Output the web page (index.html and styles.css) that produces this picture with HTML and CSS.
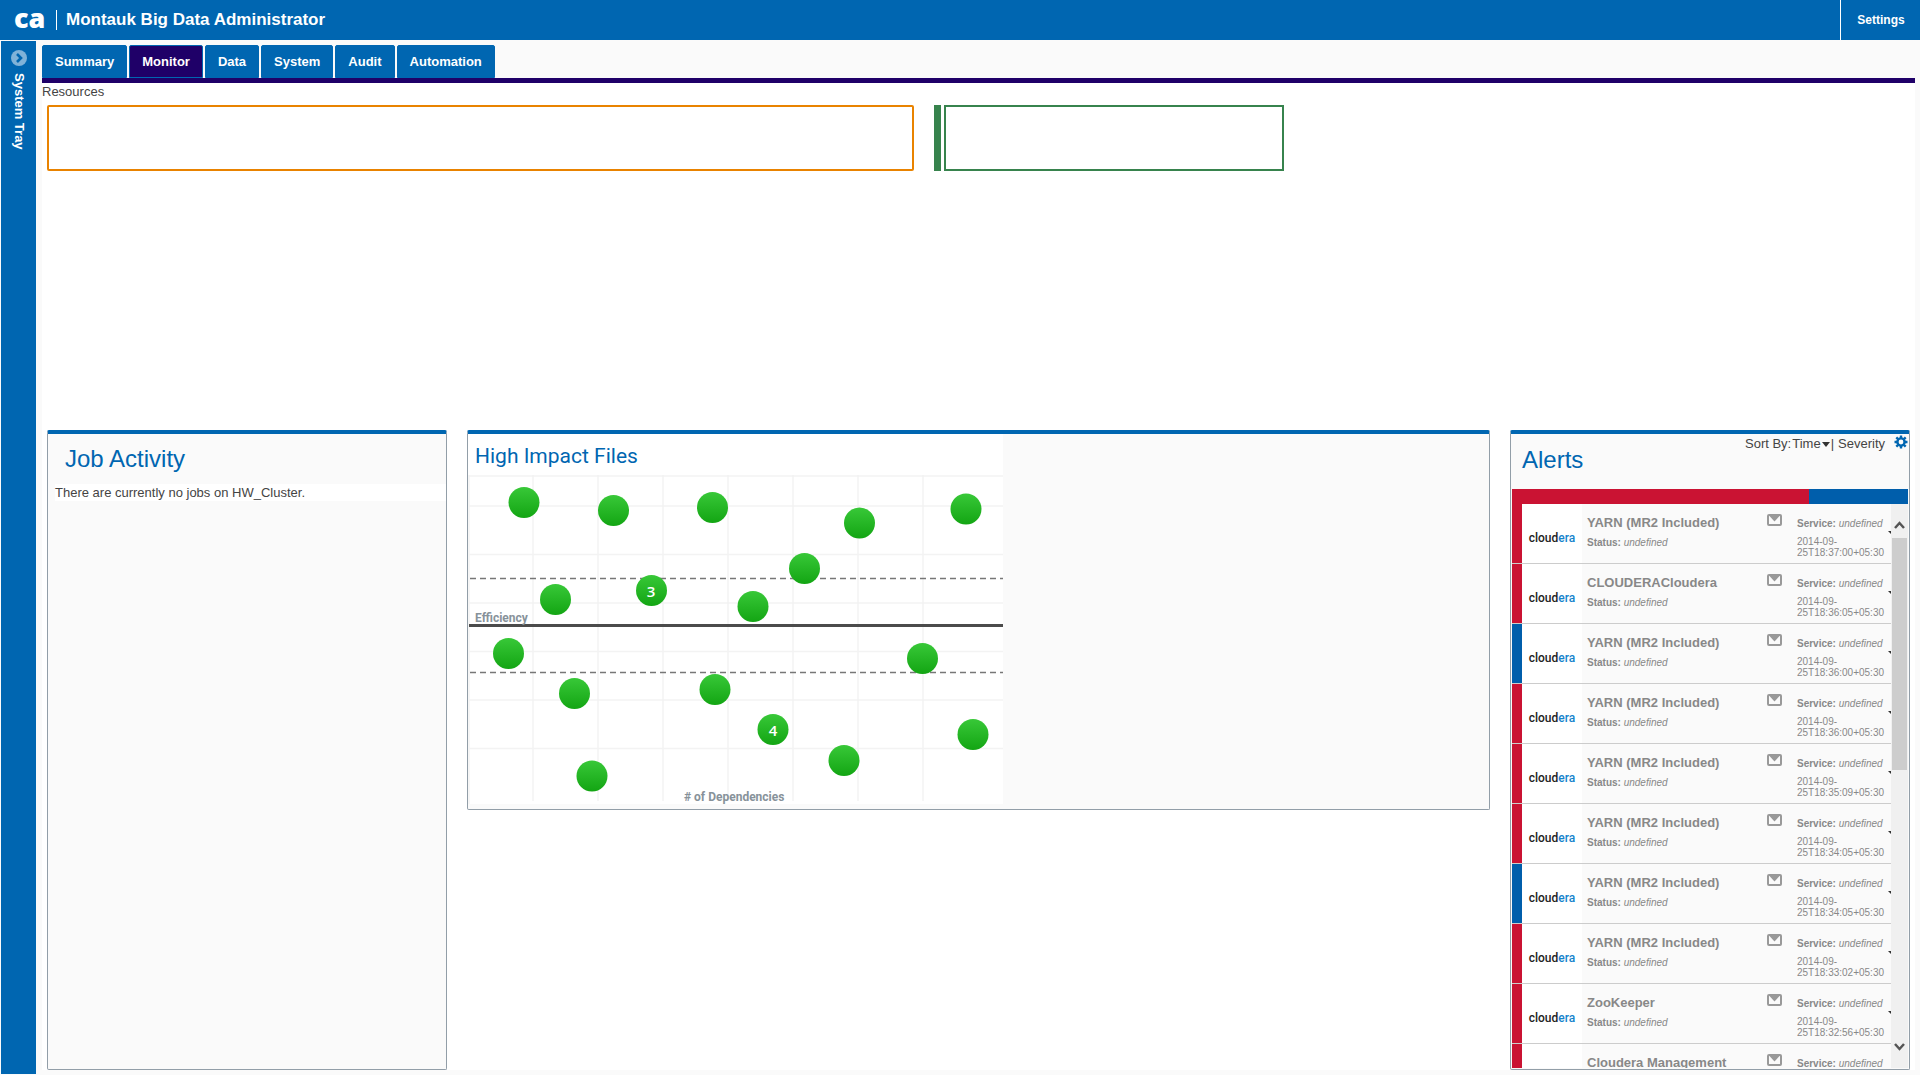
FILE: index.html
```html
<!DOCTYPE html>
<html lang="en">
<head>
<meta charset="utf-8">
<title>Montauk Big Data Administrator</title>
<link rel="stylesheet" href="styles.css">
</head>
<body>
<svg class="defs" aria-hidden="true">
  <symbol id="mail" viewBox="0 0 15 12">
    <rect x="1" y="1" width="13" height="10" rx="1" fill="none" stroke="#999" stroke-width="2"/>
    <path d="M2 1.500h11L7.500 7.500z" fill="#999"/>
  </symbol>
</svg>
<header class="topbar">
  <span class="logo">ca</span>
  <h1 class="app-title">Montauk Big Data Administrator</h1>
  <button class="settings" type="button">Settings</button>
</header>
<div class="shell">
  <aside class="tray">
    <button class="tray-toggle" type="button">
      <svg width="16" height="16" viewBox="0 0 16 16" aria-hidden="true"><circle cx="8" cy="8" r="8" fill="#80b2d8"/><path d="M6 4l4 4-4 4" fill="none" stroke="#0066b1" stroke-width="2.600"/></svg>
      <span class="tray-label">System Tray</span>
    </button>
  </aside>
  <main class="main">
    <nav class="tabs">
      <a class="tab" href="#summary">Summary</a>
      <a class="tab active" href="#monitor" aria-current="page">Monitor</a>
      <a class="tab" href="#data">Data</a>
      <a class="tab" href="#system">System</a>
      <a class="tab" href="#audit">Audit</a>
      <a class="tab" href="#automation">Automation</a>
    </nav>
    <div class="content">
      <section class="resources">
        <h2 class="resources-title">Resources</h2>
        <div class="resource-row">
          <div class="resource warn"></div>
          <div class="resource-group"><div class="resource-mark"></div><div class="resource ok"></div></div>
        </div>
      </section>
      <div class="panels">
        <section class="panel jobs">
          <h2 class="panel-title">Job Activity</h2>
          <p class="job-note">There are currently no jobs on HW_Cluster.</p>
        </section>
        <section class="panel impact">
          <div class="chart">
            <h2 class="chart-title">High Impact Files</h2>
            <svg class="plot" viewBox="0 0 535 329" role="img" aria-label="Efficiency by number of dependencies">
              <defs>
                <linearGradient id="dot" x1="0" y1="0" x2="0" y2="1"><stop offset="0" stop-color="#38c838"/><stop offset="1" stop-color="#13a513"/></linearGradient>
              </defs>
              <path class="grid" d="M65 0v326M130 0v326M195 0v326M260 0v326M325 0v326M390 0v326M455 0v326M1 0v329M1 1h534M1 31h534M1 79.500h534M1 128h534M1 176.500h534M1 225h534M1 273.500h534"/>
              <path class="dashes" d="M2 103.500h533M2 197.500h533"/>
              <path class="axis" d="M1 150.500h534"/>
              <g fill="url(#dot)">
                <circle cx="56" cy="27.500" r="15.500"/>
                <circle cx="145.500" cy="35.500" r="15.500"/>
                <circle cx="244.500" cy="32.500" r="15.500"/>
                <circle cx="391.500" cy="48" r="15.500"/>
                <circle cx="498" cy="34" r="15.500"/>
                <circle cx="336.500" cy="93.500" r="15.500"/>
                <circle cx="87.500" cy="124.500" r="15.500"/>
                <circle cx="183.500" cy="115.500" r="15.500"/>
                <circle cx="285" cy="131.500" r="15.500"/>
                <circle cx="40.500" cy="178.500" r="15.500"/>
                <circle cx="454.500" cy="183.500" r="15.500"/>
                <circle cx="106.500" cy="218.500" r="15.500"/>
                <circle cx="247" cy="214.500" r="15.500"/>
                <circle cx="305" cy="254.500" r="15.500"/>
                <circle cx="505" cy="259.500" r="15.500"/>
                <circle cx="376" cy="285.500" r="15.500"/>
                <circle cx="124" cy="301" r="15.500"/>
              </g>
              <text class="count" x="183" y="122">3</text>
              <text class="count" x="305" y="261">4</text>
              <text class="axis-label" x="7" y="147">Efficiency</text>
              <text class="axis-label" x="216" y="326"># of Dependencies</text>
            </svg>
          </div>
        </section>
        <section class="panel alerts">
          <div class="alerts-head">
            <h2 class="panel-title">Alerts</h2>
            <div class="sort">
              <span>Sort By:</span>
              <button type="button" class="sort-time">Time<svg width="8" height="5" aria-hidden="true"><path d="M0 0h8L4 5z" fill="#333"/></svg></button>
              <span>|</span>
              <button type="button" class="sort-severity">Severity</button>
              <button type="button" class="gear" aria-label="Alert settings"><svg width="14" height="14" viewBox="0 0 14 14"><circle cx="7" cy="7" r="3.600" fill="none" stroke="#0066b1" stroke-width="2.400"/><path d="M7 3V.5M7 11v2.500M3 7H.5M11 7h2.500M4 4L2.300 2.300M10 10l1.700 1.700M10 4l1.700-1.700M4 10l-1.700 1.700" stroke="#0066b1" stroke-width="2.400"/></svg></button>
            </div>
          </div>
          <div class="ratio"><div class="ratio-critical" style="width:75%"></div></div>
          <div class="alerts-body">
            <ul class="alert-list" id="alert-list"></ul>
            <div class="scrollbar" aria-hidden="true">
              <svg width="11" height="8"><path d="M1 7l4.500-5L10 7" fill="none" stroke="#555" stroke-width="2.500"/></svg>
              <div class="scroll-track"><div class="thumb"></div></div>
              <svg width="11" height="8"><path d="M1 1l4.500 5L10 1" fill="none" stroke="#555" stroke-width="2.500"/></svg>
            </div>
          </div>
        </section>
      </div>
    </div>
  </main>
</div>
<script src="alerts.js"></script>
</body>
</html>
```
FILE: styles.css
```css
* { box-sizing: border-box; }
body {
  margin: 0;
  display: flex;
  flex-direction: column;
  height: 100vh;
  min-height: 860px;
  background: #fafafa;
  color: #444;
  font: 13px/16px "Liberation Sans", Arial, sans-serif;
}
h1, h2, h3, p, ul { margin: 0; padding: 0; font-weight: normal; }
ul { list-style: none; }
button { border: 0; padding: 0; background: none; color: inherit; font: inherit; cursor: pointer; }
svg { display: block; }
.defs { position: absolute; width: 0; height: 0; }

.topbar { display: flex; align-items: center; flex: none; height: 40px; padding-left: 14px; background: #0066b1; color: #fff; }
.logo { width: 32px; padding-bottom: 4px; font: 800 27px/36px "Open Sans", sans-serif; }
.app-title { margin-left: 10px; padding-left: 9px; border-left: 1px solid #fff; font-size: 17px; font-weight: bold; line-height: 20px; }
.settings { align-self: stretch; width: 80px; margin-left: auto; padding-left: 1px; border-left: 1px solid #fff; font-size: 12px; font-weight: bold; }

.shell { display: flex; flex: 1; min-height: 0; padding: 1px 5px 1px 1px; }
.tray { flex: none; width: 35px; background: #0066b1; color: #fff; }
.tray-toggle { display: flex; flex-direction: column; align-items: center; gap: 7px; width: 100%; padding-top: 9px; }
.tray-label { writing-mode: vertical-rl; font-weight: bold; }

.main { display: flex; flex-direction: column; flex: 1; min-width: 0; padding: 4px 0 4px 6px; }
.tabs { display: flex; flex: none; gap: 2px; border-bottom: 5px solid #1f0068; }
.tab { padding: 0 12px; border: 1px solid #0066b1; border-radius: 2px 2px 0 0; background: #0066b1; color: #fff; font-weight: bold; line-height: 31px; text-decoration: none; }
.tab.active { background: #1f0068; }
.content { display: flex; flex-direction: column; flex: 1; min-height: 0; background: #fff; }

.resources { flex: none; height: 347px; }
.resources-title { font-size: 13px; line-height: 18px; }
.resource-row { display: grid; grid-template-columns: 867fr 350fr 606fr; gap: 20px; padding: 4px 5px; }
.resource { flex: 1; height: 66px; border: 2px solid; }
.resource.warn { border-color: #e98300; border-radius: 2px; }
.resource.ok { border-color: #37834d; }
.resource-group { display: flex; gap: 3px; }
.resource-mark { width: 7px; background: #37834d; }

.panels { display: grid; grid-template-columns: 400px 1fr 400px; grid-template-rows: minmax(0, 1fr); gap: 20px; flex: 1; min-height: 0; padding: 0 5px; }
.panel { border: 1px solid #929ea8; border-top: 4px solid #0066b1; border-radius: 2px; background: #fafafa; }
.panel-title { color: #0066b1; font-size: 24px; line-height: 28px; }
.jobs .panel-title { padding: 11px 17px; }
.job-note { margin-left: 7px; background: #fff; line-height: 17px; }

.impact { align-self: start; padding-bottom: 5px; }
.chart { width: 535px; max-width: 100%; background: #fff; }
.chart-title { height: 41px; padding: 6px 7px 0; color: #0066b1; font: 21px/32px Roboto, sans-serif; }
.plot { width: 100%; }
.grid { fill: none; stroke: #f3f3f3; stroke-width: 1.5; }
.dashes { fill: none; stroke: #777; stroke-width: 1.3; stroke-dasharray: 6 4; }
.axis { stroke: #4b4b4b; stroke-width: 3; }
.count { fill: #fff; font: 600 15px "Open Sans", sans-serif; text-anchor: middle; }
.axis-label { fill: #87929a; font: bold 12px Roboto, sans-serif; }

.alerts { display: flex; flex-direction: column; padding: 0 1px 1px; }
.alerts-head { display: flex; flex: none; justify-content: space-between; height: 55px; }
.alerts-head .panel-title { padding: 12px 10px; }
.sort { display: flex; align-items: center; height: 20px; }
.sort-time { display: flex; align-items: center; gap: 1px; margin: 0 1px; }
.sort-severity { margin: 0 9px 0 4px; }
.gear { padding-bottom: 4px; }
.ratio { flex: none; height: 15px; background: #005eab; }
.ratio-critical { height: 100%; background: #ca1333; }
.alerts-body { display: flex; flex: 1; min-height: 0; }
.alert-list { flex: 1; min-width: 0; overflow-y: auto; scrollbar-width: none; }
.alert { display: flex; height: 60px; border-bottom: 1px solid #ccc; overflow: hidden; color: #888; font-size: 10px; line-height: 11px; }
.severity { flex: none; width: 10px; background: #ca1333; }
.severity.info { background: #005eab; }
.vendor { flex: none; width: 60px; padding-top: 9px; background: #fff; color: #222; font: 500 12px/50px Roboto, sans-serif; text-align: center; }
.vendor span { color: #1583cc; }
.alert-main { flex: 1; min-width: 0; padding: 11px 0 0 5px; }
.alert-title { height: 22px; font-size: 13px; font-weight: bold; line-height: 16px; }
.alert-mail { flex: none; width: 30px; padding-top: 10px; align-self: flex-start; }
.alert-meta { flex: none; width: 91px; padding-top: 14px; }
.alert-time { display: block; margin-top: 7px; }
.alert-menu { flex: none; width: 3px; padding-top: 27px; align-self: flex-start; overflow: hidden; }
.scrollbar { display: flex; flex: none; flex-direction: column; align-items: center; width: 17px; padding: 17px 0; background: #f0f0f0; }
.scroll-track { flex: 1; width: 15px; padding-top: 9px; }
.thumb { height: 46%; background: #cdcdcd; }
```
FILE: alerts.js
```js
const alerts = [
  ["YARN (MR2 Included)", "18:37:00", "critical"],
  ["CLOUDERACloudera", "18:36:05", "critical"],
  ["YARN (MR2 Included)", "18:36:00", "info"],
  ["YARN (MR2 Included)", "18:36:00", "critical"],
  ["YARN (MR2 Included)", "18:35:09", "critical"],
  ["YARN (MR2 Included)", "18:34:05", "critical"],
  ["YARN (MR2 Included)", "18:34:05", "info"],
  ["YARN (MR2 Included)", "18:33:02", "critical"],
  ["ZooKeeper", "18:32:56", "critical"],
  ["Cloudera Management", "18:32:50", "critical"]
];

document.getElementById("alert-list").innerHTML = alerts.map(([title, time, level]) => `
  <li class="alert">
    <div class="severity ${level}"></div>
    <div class="vendor">cloud<span>era</span></div>
    <div class="alert-main">
      <h3 class="alert-title">${title}</h3>
      <p><b>Status:</b> <i>undefined</i></p>
    </div>
    <button class="alert-mail" type="button" aria-label="Mail alert"><svg width="15" height="12"><use href="#mail"/></svg></button>
    <div class="alert-meta">
      <p><b>Service:</b> <i>undefined</i></p>
      <time class="alert-time">2014-09-<br>25T${time}+05:30</time>
    </div>
    <button class="alert-menu" type="button" aria-label="Alert menu"><svg width="8" height="4"><path d="M0 0h8L4 4z" fill="#333"/></svg></button>
  </li>`).join("");
```
